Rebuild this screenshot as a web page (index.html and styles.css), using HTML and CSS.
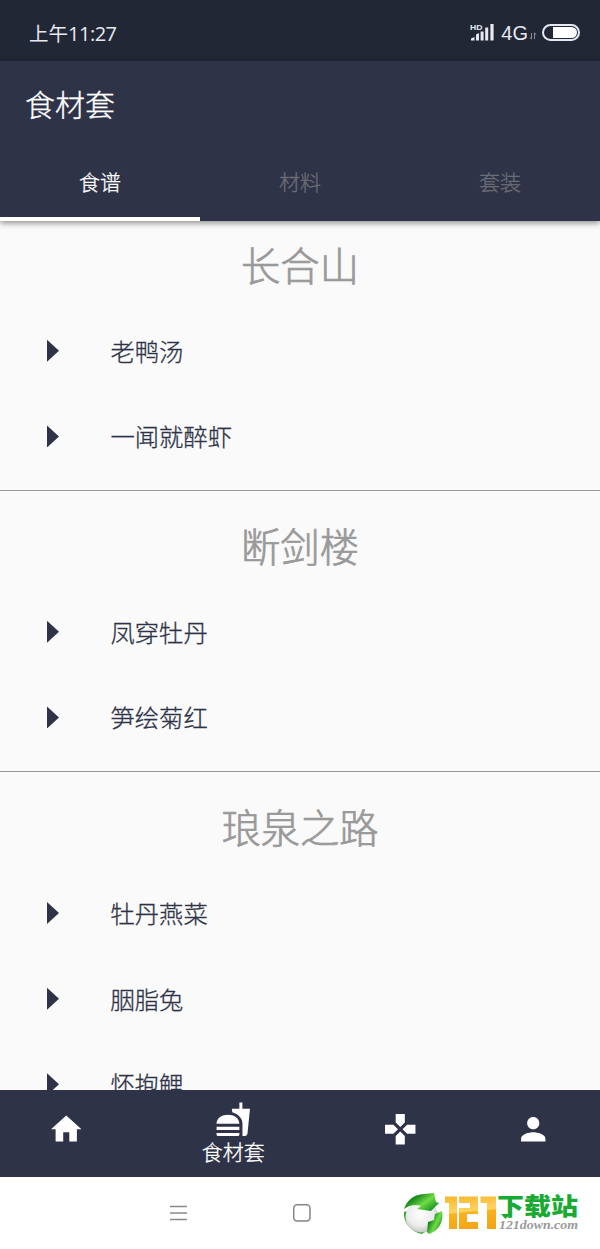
FILE: index.html
```html
<!DOCTYPE html>
<html lang="zh-CN">
<head>
<meta charset="utf-8">
<title>食材套</title>
<link rel="stylesheet" href="styles.css">
</head>
<body>
<div class="app">
  <div class="status">
    <span class="clock">上午<span class="digits">11:27</span></span>
    <div class="indicators">
      <svg class="signal" width="26" height="22" viewBox="0 0 26 22">
        <text x="0" y="7.6" class="hd" textLength="12.500" lengthAdjust="spacingAndGlyphs">HD</text>
        <path d="M1 18.500v-2l3.500-1.500v3.500zM6 18.500V12.500l3-1.500v7.500zM10.600 18.500V9.500h3v9zM15.200 18.500v-13h3v13zM20.400 18.500V2h3.200v16.500z" fill="#e6e9f2"/>
      </svg>
      <span class="network">4G</span>
      <svg class="traffic" width="8" height="10" viewBox="0 0 8 10"><path d="M2.500 2v6L.8 6.500M5.500 8V2l1.700 1.500" fill="none" stroke="#888d99"/></svg>
      <span class="battery"><span class="charge"></span></span>
    </div>
  </div>
  <header class="header">
    <h1 class="title">食材套</h1>
    <nav class="tabs">
      <a class="tab active">食谱</a>
      <a class="tab">材料</a>
      <a class="tab">套装</a>
    </nav>
  </header>
  <main class="content">
    <section class="group">
      <h2 class="place">长合山</h2>
      <div class="row"><span class="arrow"></span><span class="dish">老鸭汤</span></div>
      <div class="row"><span class="arrow"></span><span class="dish">一闻就醉虾</span></div>
    </section>
    <section class="group">
      <h2 class="place">断剑楼</h2>
      <div class="row"><span class="arrow"></span><span class="dish">凤穿牡丹</span></div>
      <div class="row"><span class="arrow"></span><span class="dish">笋绘菊红</span></div>
    </section>
    <section class="group">
      <h2 class="place">琅泉之路</h2>
      <div class="row"><span class="arrow"></span><span class="dish">牡丹燕菜</span></div>
      <div class="row"><span class="arrow"></span><span class="dish">胭脂兔</span></div>
      <div class="row"><span class="arrow"></span><span class="dish">怀抱鲤</span></div>
    </section>
  </main>
  <nav class="bottom-nav">
    <a class="nav-item"><svg class="icon" viewBox="0 0 24 24"><path d="M10 20v-6h4v6h5v-8h3L12 3 2 12h3v8z"/></svg></a>
    <a class="nav-item current"><svg class="icon" viewBox="0 0 24 24"><path d="M18.060 22.990h1.660c.84 0 1.530-.64 1.630-1.460L23 5.050h-5V1h-1.970v4.050h-4.970l.3 2.340c1.710.47 3.310 1.320 4.270 2.260 1.440 1.420 2.430 2.890 2.430 5.290v8.050zM1 21.990V21h15.030v.99c0 .55-.45 1-1.010 1H2.010c-.56 0-1.010-.45-1.010-1zm15.030-7c0-8-15.030-8-15.030 0h15.030zM1.020 17h15v2h-15z"/></svg><span class="nav-label">食材套</span></a>
    <a class="nav-item"><svg class="icon" viewBox="0 0 24 24"><path d="M15 7.500V2H9v5.500l3 3 3-3zM7.500 9H2v6h5.500l3-3-3-3zM9 16.500V22h6v-5.500l-3-3-3 3zM16.500 9l-3 3 3 3H22V9h-5.500z"/></svg></a>
    <a class="nav-item"><svg class="icon" viewBox="0 0 24 24"><path d="M12 12c2.210 0 4-1.790 4-4s-1.790-4-4-4-4 1.790-4 4 1.790 4 4 4zm0 2c-2.670 0-8 1.340-8 4v2h16v-2c0-2.660-5.330-4-8-4z"/></svg></a>
  </nav>
  <footer class="system">
    <svg class="system-menu" width="18" height="18" viewBox="0 0 18 18"><path d="M0 2.500h17M0 9h17M0 15.500h17" stroke="#8a8a8a" stroke-width="1.300"/></svg>
    <svg class="system-home" width="20" height="20" viewBox="0 0 20 20"><rect x="1.700" y="1.700" width="16.300" height="16.300" rx="3.500" fill="none" stroke="#858585" stroke-width="1.500"/></svg>
    <svg class="brand" width="184" height="50" viewBox="0 0 184 50">
      <defs>
        <radialGradient id="ball" cx=".45" cy=".4" r=".65"><stop offset="0" stop-color="#fff"/><stop offset=".6" stop-color="#ececec"/><stop offset="1" stop-color="#bdbdbd"/></radialGradient>
        <linearGradient id="leaf" x1="0" y1="0" x2="1" y2=".7"><stop offset="0" stop-color="#0b7315"/><stop offset=".35" stop-color="#1d8d20"/><stop offset=".65" stop-color="#6fdc45"/><stop offset="1" stop-color="#159021"/></linearGradient>
        <linearGradient id="gold" x1="0" y1="0" x2=".15" y2="1"><stop offset="0" stop-color="#f8b72d"/><stop offset=".5" stop-color="#ffd263"/><stop offset=".55" stop-color="#f9b31f"/><stop offset="1" stop-color="#f5a617"/></linearGradient>
      </defs>
      <path d="M4 23c-1 10 7 20 18 22l3-2L8 22z" fill="#35a42a"/>
      <ellipse cx="22" cy="28" rx="16.500" ry="15.500" fill="url(#ball)"/>
      <path d="M4 20C7 11 14 5.500 24 5l10-1 2 9 3 1-8 8-14-2 4-3c-6-2-11-1-17 3z" fill="url(#leaf)"/>
      <path d="M35 25l7-3c2 10-3 20-13 23l-2-2 1-10 6-2z" fill="url(#leaf)"/>
      <path d="M45 7.500h12V40h-8V14h-4zM59 7.500h19V25H67v8h11v7H59V19h11v-5H59zM80.500 7.500H96V40h-9V14h-6.500z" fill="url(#gold)"/>
      <text class="brand-name" x="97" y="26" textLength="81" lengthAdjust="spacingAndGlyphs">下载站</text>
      <path d="M101 25h9l-4.500 5z" fill="#18aa32"/>
      <text class="brand-url" x="99" y="40" textLength="79" lengthAdjust="spacingAndGlyphs">121down.com</text>
    </svg>
  </footer>
</div>
</body>
</html>
```
FILE: styles.css
```css
* { box-sizing: border-box; }
body {
  margin: 0;
  background: #fff;
  font-family: "Noto Sans CJK SC", "Noto Sans", sans-serif;
  font-weight: 300;
}
.app { display: flex; flex-direction: column; width: 600px; height: 1249px; overflow: hidden; }
.status {
  display: flex; align-items: center; justify-content: space-between;
  height: 61px; flex: none; padding: 4px 20px 0 29px;
  background: #222736; color: #e6e9f2;
}
.clock { margin-top: 2px; font-size: 19.5px; font-weight: 400; line-height: 30px; }
.digits { font-family: "Open Sans", sans-serif; font-size: 20px; letter-spacing: -.5px; }
.indicators { display: flex; align-items: center; }
.hd { font: 700 8px "Liberation Sans", sans-serif; fill: #e6e9f2; }
.signal { margin-top: 0; }
.network { margin: 0 0 0 5px; font: 400 20px/28px "Liberation Sans", sans-serif; }
.traffic { margin: 6px 5px 0 1px; }
.battery { display: flex; justify-content: flex-end; width: 38px; height: 17px; padding: 1px; border: 2px solid #e6e9f2; border-radius: 9px; }
.charge { width: 24px; background: #fff; border-radius: 0 6px 6px 0; }
.header {
  position: relative; flex: none; height: 160px;
  background: #2e3348; color: #fff;
  box-shadow: 0 2px 6px rgba(0, 0, 0, .45);
}
.title, .tab, .dish, .place, .nav-label { -webkit-text-stroke: .3px currentColor; }
.place { -webkit-text-stroke-width: .7px; }
.title { margin: 0; padding: 20px 25px 0; height: 81px; font-size: 30px; line-height: 44px; font-weight: 300; }
.tabs { display: flex; height: 79px; }
.tab { flex: 1; text-align: center; font-size: 21px; line-height: 78px; height: 79px; color: #6c6d75; box-shadow: none; }
.tab.active { color: #fff; box-shadow: inset 0 -4px #fff; }
.content { flex: none; height: 869px; overflow: hidden; background: #fafafa; color: #2e3348; }
.group { height: 281.3px; border-bottom: 1px solid #999; }
.group:first-child { height: 270px; }
.group:last-child { height: auto; }
.place { margin: 0; padding: 24px 0 15px; font-size: 39.300px; line-height: 60px; font-weight: 300; color: #999; text-align: center; }
.group:first-child .place { padding-top: 13px; }
.row { display: flex; align-items: center; height: 85.6px; padding-left: 47px; font-size: 24.3px; }
.dish { margin-top: -3px; }
.arrow { width: 12px; height: 22px; margin-right: 51.5px; margin-top: -2px; background: #2e3348; clip-path: polygon(0 0, 100% 50%, 0 100%); }
.bottom-nav { display: grid; grid-template-columns: 2fr 3fr 2fr 2fr; flex: none; height: 87px; background: #2e3348; color: #fff; }
.nav-item { display: flex; flex-direction: column; align-items: center; padding-top: 21px; }
.nav-item.current { padding-top: 11px; }
.icon { width: 36.5px; height: 36.5px; fill: currentColor; }
.nav-label { margin-top: -1px; font-size: 21px; line-height: 28px; }
.system { display: flex; align-items: center; flex: none; height: 72px; background: #fff; }
.system-menu { margin-left: 170px; }
.system-home { margin-left: 104px; }
.brand { margin: 2px 0 0 88px; }
.brand-name { font: 900 24px "Noto Sans CJK SC", sans-serif; fill: #18aa32; }
.brand-url { font: italic 700 12px "Liberation Serif", serif; fill: #999; }
```
